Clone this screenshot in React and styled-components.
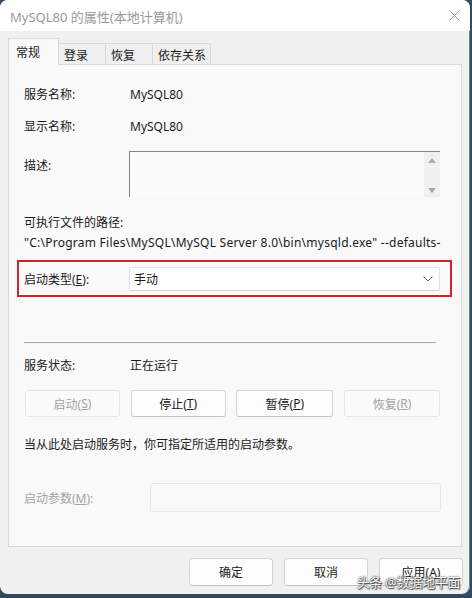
import React from 'react'
import styled, { createGlobalStyle } from 'styled-components'

const Global = createGlobalStyle`
  html, body {
    margin: 0;
    padding: 0;
    background: #34495c;
  }
  body {
    font-family: "Segoe UI", "Noto Sans", "Noto Sans CJK SC", sans-serif;
    font-size: 12px;
    color: #1a1a1a;
  }
`

const Window = styled.div`
  position: relative;
  width: 470px;
  height: 594px;
  background: #f0f0f0;
  border-radius: 8px;
  overflow: hidden;
  display: flex;
  flex-direction: column;
  box-shadow: inset -1px 0 0 #5f86a8;
`

const TitleBar = styled.div`
  height: 31px;
  flex: none;
  background: #ffffff;
  display: flex;
  align-items: center;
  justify-content: space-between;
  padding: 0 10px 0 10px;
`

const Title = styled.div`
  font-size: 13px;
  color: #9a9a9a;
  padding-top: 2px;
`

const Close = styled.svg`
  width: 11px;
  height: 11px;
`

const Body = styled.div`
  flex: 1;
  display: flex;
  flex-direction: column;
  padding: 7px 8px 0 8px;
`

const TabStrip = styled.div`
  display: flex;
  align-items: flex-end;
  height: 27px;
  margin-bottom: -1px;
  position: relative;
  z-index: 1;
`

const Tab = styled.div`
  width: ${p => p.$w}px;
  box-sizing: border-box;
  height: ${p => (p.$active ? 27 : 22)}px;
  padding-left: ${p => (p.$active ? 7 : 5)}px;
  display: flex;
  align-items: center;
  background: ${p => (p.$active ? '#f9f9f9' : '#f0f0f0')};
  border: 1px solid #d9d9d9;
  border-bottom: ${p => (p.$active ? 'none' : '1px solid #d9d9d9')};
  border-left: ${p => (p.$first || p.$active ? '1px solid #d9d9d9' : 'none')};
  font-size: 12px;
  color: #1a1a1a;
  padding-top: ${p => (p.$active ? 0 : 1)}px;
`

const Panel = styled.div`
  height: 483px;
  box-sizing: border-box;
  background: #f9f9f9;
  border: 1px solid #d9d9d9;
  padding: 19px 0 0 15px;
  display: flex;
  flex-direction: column;
`

const Row = styled.div`
  display: flex;
  align-items: ${p => p.$top ? 'flex-start' : 'center'};
  min-height: 20px;
  margin-top: ${p => p.$mt || 0}px;
`

const Label = styled.div`
  width: ${p => p.$w || 106}px;
  flex: none;
  color: ${p => (p.$dim ? '#a3a3a3' : '#1a1a1a')};
  padding-top: ${p => p.$pt || 0}px;
`

const Value = styled.div`
  color: #1a1a1a;
  white-space: nowrap;
`

const DescBox = styled.div`
  width: 311px;
  height: 46px;
  box-sizing: border-box;
  margin-left: -1px;
  border-top: 1px solid #838383;
  border-left: 1px solid #838383;
  background: #fbfbfb;
  display: flex;
  justify-content: flex-end;
`

const ScrollTrack = styled.div`
  width: 16px;
  background: #f0f0f0;
  display: flex;
  flex-direction: column;
  justify-content: space-between;
  align-items: center;
  padding: 6px 0 4px;
`

const Arrow = styled.div`
  width: 0;
  height: 0;
  border-left: 4px solid transparent;
  border-right: 4px solid transparent;
  ${p => p.$down ? 'border-top: 5px solid #a8a8a8;' : 'border-bottom: 5px solid #a8a8a8;'}
`

const PathText = styled.div`
  white-space: nowrap;
  letter-spacing: 0.25px;
`

const Highlight = styled.div`
  margin-top: 8px;
  margin-left: -7px;
  width: 435px;
  height: 37px;
  box-sizing: border-box;
  border: 2px solid #d3222c;
  display: flex;
  align-items: center;
  padding: 1px 0 0 5px;
`

const Combo = styled.div`
  width: 311px;
  height: 24px;
  box-sizing: border-box;
  margin-left: -1px;
  background: #ffffff;
  border: 1px solid #e1e1e1;
  border-bottom-color: #cfcfcf;
  border-radius: 2px;
  display: flex;
  align-items: center;
  justify-content: space-between;
  padding: 0 6px 0 4px;
`

const Separator = styled.div`
  margin-top: 45px;
  width: 412px;
  height: 1px;
  background: #a5a5a5;
`

const ButtonRow = styled.div`
  margin-top: 15px;
  margin-left: 1px;
  width: 415px;
  display: grid;
  grid-template-columns: 95px 95px 97px 96px;
  column-gap: 10px;
  justify-content: space-between;
`

const Btn = styled.div`
  height: 27px;
  box-sizing: border-box;
  border-radius: 3px;
  display: flex;
  align-items: center;
  justify-content: center;
  background: ${p => (p.$disabled ? '#fafafa' : '#fdfdfd')};
  border: 1px solid ${p => (p.$disabled ? '#e6e6e6' : '#d3d3d3')};
  border-bottom-color: ${p => (p.$disabled ? '#e6e6e6' : '#c2c2c2')};
  color: ${p => (p.$disabled ? '#a3a3a3' : '#1a1a1a')};
  font-size: 12px;
`

const ParamInput = styled.div`
  width: 291px;
  height: 29px;
  box-sizing: border-box;
  background: #f9f9f9;
  border: 1px solid #e6e6e6;
  border-radius: 3px;
`

const Footer = styled.div`
  display: flex;
  justify-content: flex-end;
  gap: 11px;
  padding: 11px 0 0 0;
  margin-right: -1px;
`

const FooterBtn = styled.div`
  width: 84px;
  height: 28px;
  box-sizing: border-box;
  background: #fdfdfd;
  border: 1px solid #d3d3d3;
  border-bottom-color: #c2c2c2;
  border-radius: 4px;
  display: flex;
  align-items: center;
  justify-content: center;
  font-size: 12px;
  color: #1a1a1a;
`

const Watermark = styled.div`
  position: absolute;
  right: 10px;
  bottom: 3px;
  font-size: 13px;
  color: #ffffff;
  letter-spacing: -0.3px;
  text-shadow: 0 0 1px #333, 0 0 2px #555, 1px 1px 1px #444;
  white-space: nowrap;
`

export default function App() {
  return (
    <>
      <Global />
      <Window>
        <TitleBar>
          <Title>MySQL80 的属性(本地计算机)</Title>
          <Close viewBox="0 0 11 11">
            <path d="M0.5 0.5 L10.5 10.5 M10.5 0.5 L0.5 10.5" stroke="#9a9a9a" strokeWidth="1" fill="none" />
          </Close>
        </TitleBar>
        <Body>
          <TabStrip>
            <Tab $w={51} $active $first>常规</Tab>
            <Tab $w={47}>登录</Tab>
            <Tab $w={47}>恢复</Tab>
            <Tab $w={58}>依存关系</Tab>
          </TabStrip>
          <Panel>
            <Row>
              <Label>服务名称:</Label>
              <Value>MySQL80</Value>
            </Row>
            <Row $mt={12}>
              <Label>显示名称:</Label>
              <Value>MySQL80</Value>
            </Row>
            <Row $mt={15} $top>
              <Label $pt={5}>描述:</Label>
              <DescBox>
                <ScrollTrack>
                  <Arrow />
                  <Arrow $down />
                </ScrollTrack>
              </DescBox>
            </Row>
            <Row $mt={15}>
              <Label $w={200}>可执行文件的路径:</Label>
            </Row>
            <Row>
              <PathText>"C:\Program Files\MySQL\MySQL Server 8.0\bin\mysqld.exe" --defaults-</PathText>
            </Row>
            <Highlight>
              <Label>启动类型(<u>E</u>):</Label>
              <Combo>
                <span>手动</span>
                <svg width="10" height="6" viewBox="0 0 10 6">
                  <path d="M0.5 0.5 L5 5 L9.5 0.5" stroke="#606060" strokeWidth="1" fill="none" />
                </svg>
              </Combo>
            </Highlight>
            <Separator />
            <Row $mt={12}>
              <Label>服务状态:</Label>
              <Value>正在运行</Value>
            </Row>
            <ButtonRow>
              <Btn $disabled>启动(<u>S</u>)</Btn>
              <Btn>停止(<u>T</u>)</Btn>
              <Btn>暂停(<u>P</u>)</Btn>
              <Btn $disabled>恢复(<u>R</u>)</Btn>
            </ButtonRow>
            <Row $mt={17}>
              <Value>当从此处启动服务时，你可指定所适用的启动参数。</Value>
            </Row>
            <Row $mt={29}>
              <Label $w={126} $dim>启动参数(<u>M</u>):</Label>
              <ParamInput />
            </Row>
          </Panel>
          <Footer>
            <FooterBtn>确定</FooterBtn>
            <FooterBtn>取消</FooterBtn>
            <FooterBtn>应用(<u>A</u>)</FooterBtn>
          </Footer>
        </Body>
        <Watermark>头条 @数据地平面</Watermark>
      </Window>
    </>
  )
}
